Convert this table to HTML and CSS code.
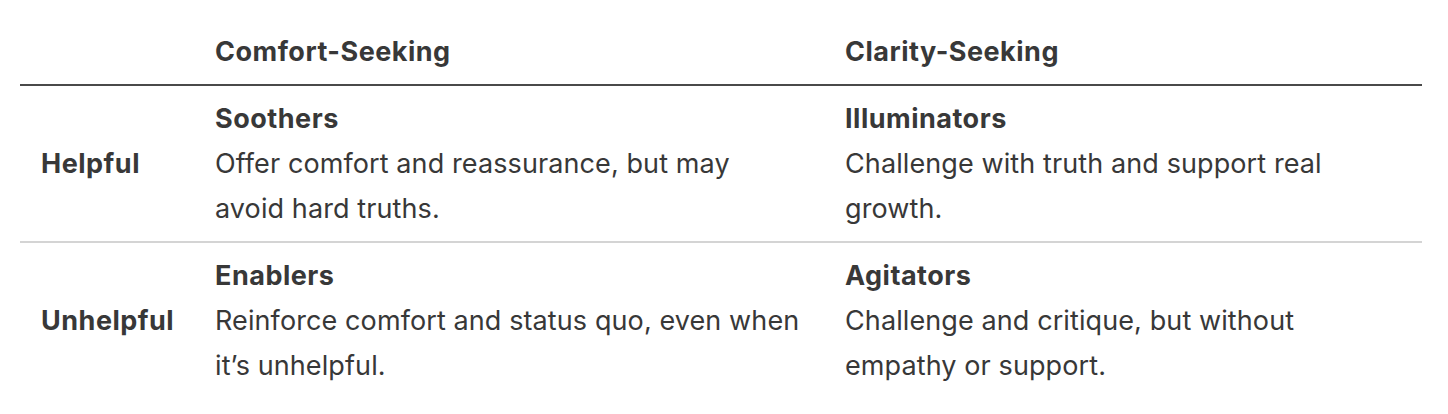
FILE: index.html
```html
<!DOCTYPE html>
<html>
<head>
<meta charset="utf-8">
<link rel="stylesheet" href="styles.css">
</head>
<body>
<table class="matrix">
  <colgroup>
    <col class="c-label">
    <col class="c-comfort">
    <col class="c-clarity">
  </colgroup>
  <thead>
    <tr>
      <th></th>
      <th>Comfort-Seeking</th>
      <th>Clarity-Seeking</th>
    </tr>
  </thead>
  <tbody>
    <tr>
      <td class="label">Helpful</td>
      <td class="comfort"><strong>Soothers</strong><br>Offer comfort and reassurance, but may avoid hard truths.</td>
      <td><strong>Illuminators</strong><br>Challenge with truth and support real growth.</td>
    </tr>
    <tr>
      <td class="label">Unhelpful</td>
      <td class="comfort"><strong>Enablers</strong><br>Reinforce comfort and status quo, even when it’s unhelpful.</td>
      <td><strong>Agitators</strong><br>Challenge and critique, but without empathy or support.</td>
    </tr>
  </tbody>
</table>
</body>
</html>
```
FILE: styles.css
```css
html, body {
  margin: 0;
  padding: 0;
  background: #ffffff;
}
body {
  padding: 19px 26px 0 20px;
  font-family: "Inter", "Noto Sans", sans-serif;
  font-size: 27px;
  line-height: 45px;
  color: #383838;
}
.matrix {
  border-collapse: collapse;
  width: 1402px;
  table-layout: fixed;
}
.c-label { width: 175px; }
.c-comfort { width: 630px; }
.c-clarity { width: 597px; }
.matrix th {
  text-align: left;
  font-weight: 700;
  letter-spacing: 0.5px;
  padding: 10px 20px;
  border-bottom: 2px solid #4a4a4a;
}
.matrix td {
  padding: 10px 20px;
  vertical-align: top;
  letter-spacing: 0.1px;
}
.matrix td.comfort {
  padding-right: 24px;
}
.matrix tbody tr:first-child td {
  border-bottom: 2px solid #d4d4d4;
}
.matrix td.label {
  font-weight: 700;
  letter-spacing: 0.5px;
  vertical-align: middle;
  padding-left: 21px;
}
.matrix strong {
  font-weight: 700;
  letter-spacing: 0.5px;
}
```
